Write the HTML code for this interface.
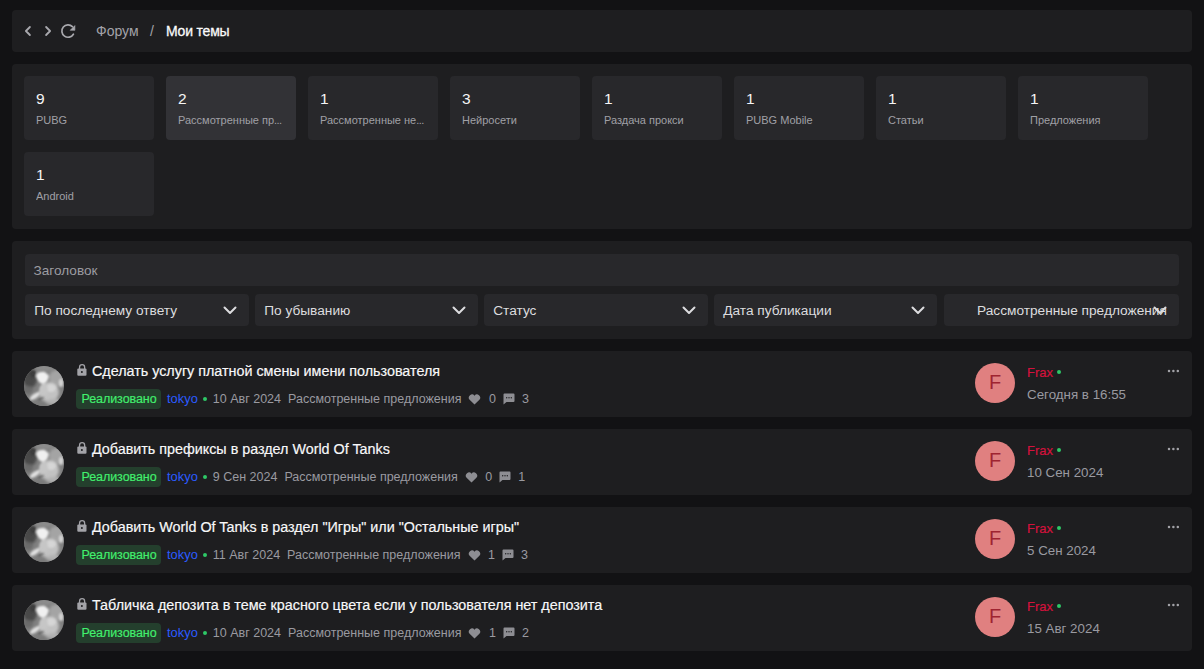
<!DOCTYPE html>
<html><head><meta charset="utf-8">
<style>
*{box-sizing:border-box;margin:0;padding:0}
html,body{width:1204px;height:669px;overflow:hidden;background:#121214;font-family:"Liberation Sans",sans-serif;color:#f2f2f3}
.abs{position:absolute}
.panel{position:absolute;left:12px;width:1180px;background:#1e1e20;border-radius:4px}
.crumbs{top:10px;height:42px}
.ic{position:absolute;top:0;left:0}
.bc{position:absolute;top:12px;font-size:14px;line-height:18px;white-space:nowrap}
.stats{top:64px;height:165px}
.card{position:absolute;width:130px;height:64px;background:#28282b;border-radius:4px}
.card.act{background:#323236}
.card .n{position:absolute;left:12px;top:13px;font-size:15.5px;line-height:20px;color:#f5f5f5}
.card .l{position:absolute;left:12px;top:37px;width:106px;font-size:11px;line-height:14px;color:#a0a0a6;white-space:nowrap;overflow:hidden;text-overflow:ellipsis}
.filters{top:241px;height:98px}
.inp{position:absolute;left:13px;top:13px;width:1154px;height:31.5px;background:#28282b;border-radius:4px}
.inp span{position:absolute;left:8.6px;top:9px;font-size:13.6px;line-height:16px;color:#9c9ca2}
.sel{position:absolute;top:53px;height:31.5px;background:#28282b;border-radius:4px;overflow:hidden}
.sel span{position:absolute;left:9.2px;top:8px;font-size:13.7px;line-height:17px;color:#dcdcdf;white-space:nowrap}
.sel svg{position:absolute;right:12.5px;top:12px}
.topic{position:absolute;left:12px;width:1180px;height:66px;background:#1e1e20;border-radius:4px}
.av{position:absolute;left:12px;top:15px;width:40px;height:40px;display:block}
.ttl{position:absolute;left:80px;top:11px;font-size:14.35px;line-height:18px;color:#f8f8f9;-webkit-text-stroke:0.18px #f8f8f9;white-space:nowrap;letter-spacing:-0.01px}
.lock{position:absolute;left:65px;top:13px}
.meta{position:absolute;left:64px;top:38px;height:20px;white-space:nowrap;font-size:12.5px;line-height:20px;color:#9a9aa0;display:flex;align-items:center}
.badge{height:19.5px;width:85px;background:#243f2d;border-radius:4px;color:#42f06e;padding-left:5.5px;line-height:21.5px;letter-spacing:-0.07px;-webkit-text-stroke:0.15px #42f06e}
.meta .tk{color:#2b5bff;margin-left:6px;font-size:12.9px}
.meta .gd{width:4px;height:4px;border-radius:50%;background:#2ec866;margin:0 6px 0 5px}
.meta .cat{margin-left:7px}
.meta svg{display:block}
.meta .ih{margin-left:7px}
.meta .n1{margin-left:7.5px}
.meta .ic2{margin-left:7px}
.meta .n2{margin-left:7px}
.fav{position:absolute;left:963px;top:12px;width:40px;height:40px;border-radius:50%;background:#e08080;color:#9f2431;font-size:20px;line-height:39px;text-align:center}
.frax{position:absolute;left:1015px;top:14px;font-size:13px;line-height:16px;color:#d3123c;-webkit-text-stroke:0.2px #d3123c}
.gdot{position:absolute;width:4px;height:4px;border-radius:50%;background:#2ec866}
.date{position:absolute;left:1015px;top:35px;font-size:13.35px;line-height:17px;color:#9a9aa0;white-space:nowrap}
.dots{position:absolute;left:1155px;top:16.5px}
</style></head><body>
<svg width="0" height="0" style="position:absolute"><defs><clipPath id="cc"><circle cx="20" cy="20" r="20"/></clipPath><filter id="bl" x="-20%" y="-20%" width="140%" height="140%"><feGaussianBlur stdDeviation="1.6"/></filter><filter id="bl2" x="-30%" y="-30%" width="160%" height="160%"><feGaussianBlur stdDeviation="0.8"/></filter></defs></svg>
<div class="panel crumbs">
  <svg class="ic" width="80" height="42" viewBox="0 0 80 42">
    <path d="M17.9 17 L13.9 21 L17.9 25" fill="none" stroke="#a9a9ae" stroke-width="1.8" stroke-linecap="round" stroke-linejoin="round"/>
    <path d="M34.1 17 L38.1 21 L34.1 25" fill="none" stroke="#a9a9ae" stroke-width="1.8" stroke-linecap="round" stroke-linejoin="round"/>
    <path d="M61.4 24.2 A6.2 6.2 0 1 1 60.4 16.6" fill="none" stroke="#a9a9ae" stroke-width="1.7" stroke-linecap="round"/>
    <path d="M62.9 15.6 L62.9 20.3 L58.2 20.3 Z" fill="#a9a9ae" stroke="#a9a9ae" stroke-width="0.6" stroke-linejoin="round"/>
  </svg>
  <div class="bc" style="left:84px;color:#a3a3a9">Форум</div>
  <div class="bc" style="left:138px;color:#a3a3a9">/</div>
  <div class="bc" style="left:154px;color:#fafafa;-webkit-text-stroke:0.3px #fafafa;letter-spacing:-0.2px">Мои темы</div>
</div>
<div class="panel stats">
  <div class="card " style="left:12px;top:12px"><div class="n">9</div><div class="l">PUBG</div></div>
  <div class="card act" style="left:154px;top:12px"><div class="n">2</div><div class="l">Рассмотренные пр<span style="letter-spacing:-0.6px">...</span></div></div>
  <div class="card " style="left:296px;top:12px"><div class="n">1</div><div class="l">Рассмотренные не<span style="letter-spacing:-0.6px">...</span></div></div>
  <div class="card " style="left:438px;top:12px"><div class="n">3</div><div class="l">Нейросети</div></div>
  <div class="card " style="left:580px;top:12px"><div class="n">1</div><div class="l">Раздача прокси</div></div>
  <div class="card " style="left:722px;top:12px"><div class="n">1</div><div class="l">PUBG Mobile</div></div>
  <div class="card " style="left:864px;top:12px"><div class="n">1</div><div class="l">Статьи</div></div>
  <div class="card " style="left:1006px;top:12px"><div class="n">1</div><div class="l">Предложения</div></div>
  <div class="card " style="left:12px;top:88px"><div class="n">1</div><div class="l">Android</div></div>
</div>
<div class="panel filters">
  <div class="inp"><span>Заголовок</span></div>
  <div class="sel" style="left:13px;width:224px"><span>По последнему ответу</span><svg width="14" height="9" viewBox="0 0 14 9"><path d="M1.5 1.5 L7 7 L12.5 1.5" fill="none" stroke="#dcdcdf" stroke-width="2" stroke-linecap="round" stroke-linejoin="round"/></svg></div>
  <div class="sel" style="left:243px;width:223px"><span>По убыванию</span><svg width="14" height="9" viewBox="0 0 14 9"><path d="M1.5 1.5 L7 7 L12.5 1.5" fill="none" stroke="#dcdcdf" stroke-width="2" stroke-linecap="round" stroke-linejoin="round"/></svg></div>
  <div class="sel" style="left:472px;width:224px"><span>Статус</span><svg width="14" height="9" viewBox="0 0 14 9"><path d="M1.5 1.5 L7 7 L12.5 1.5" fill="none" stroke="#dcdcdf" stroke-width="2" stroke-linecap="round" stroke-linejoin="round"/></svg></div>
  <div class="sel" style="left:702px;width:223px"><span>Дата публикации</span><svg width="14" height="9" viewBox="0 0 14 9"><path d="M1.5 1.5 L7 7 L12.5 1.5" fill="none" stroke="#dcdcdf" stroke-width="2" stroke-linecap="round" stroke-linejoin="round"/></svg></div>
  <div class="sel" style="left:931.5px;width:235.5px"><span style="left:33.5px">Рассмотренные предложения</span><svg width="14" height="9" viewBox="0 0 14 9"><path d="M1.5 1.5 L7 7 L12.5 1.5" fill="none" stroke="#dcdcdf" stroke-width="2" stroke-linecap="round" stroke-linejoin="round"/></svg></div>
</div>
<div class="topic" style="top:351px">
  <svg class="av" width="40" height="40" viewBox="0 0 40 40"><g clip-path="url(#cc)"><rect width="40" height="40" fill="#808080"/><g filter="url(#bl)"><ellipse cx="6" cy="13" rx="7" ry="9" fill="#4a4a4a"/><ellipse cx="33" cy="12" rx="8" ry="8" fill="#a4a4a4"/><ellipse cx="25" cy="26" rx="10" ry="10" fill="#c2c2c2"/><ellipse cx="4" cy="24" rx="5" ry="4" fill="#6a6a6a"/><ellipse cx="18" cy="40" rx="14" ry="4" fill="#7a7a7a"/><ellipse cx="30" cy="36" rx="8" ry="3" fill="#b0b0b0"/><ellipse cx="20" cy="2" rx="9" ry="3" fill="#8c8c8c"/></g><g filter="url(#bl2)"><path d="M12 10 Q13 6 17 6 Q21 5 23 8 Q26 9 24 13 Q23 17 19 18 Q14 17 12 10 Z" fill="#f0f0f0"/><ellipse cx="11" cy="30" rx="6" ry="2.3" transform="rotate(-35 11 30)" fill="#e0e0e0"/><ellipse cx="37" cy="17" rx="2.2" ry="4" fill="#d4d4d4"/><path d="M14 34 L20 31" stroke="#4e4e4e" stroke-width="1.3"/><ellipse cx="27" cy="22" rx="5" ry="4" fill="#d6d6d6"/><ellipse cx="20" cy="24" rx="4" ry="6" fill="#c6c6c6"/><ellipse cx="9" cy="8" rx="3" ry="4" fill="#3e3e3e"/></g></g></svg>
  <svg class="lock" width="11" height="13" viewBox="0 0 11 13"><path d="M2.55 5 V3.2 A2.55 2.55 0 0 1 7.65 3.2 V5" fill="none" stroke="#a3a3a8" stroke-width="1.3"/><rect x="0.3" y="4.4" width="9.2" height="7.4" rx="1.1" fill="#a3a3a8"/><circle cx="4.9" cy="7.9" r="1" fill="#1e1e20"/></svg><div class="ttl">Сделать услугу платной смены имени пользователя</div>
  <div class="meta"><div class="badge">Реализовано</div><span class="tk">tokyo</span><i class="gd"></i><span>10 Авг 2024</span><span class="cat">Рассмотренные предложения</span><span class="ih"><svg width="13" height="11" viewBox="0 0 13 11"><path d="M6.5 10.5 L1.6 5.8 A3 3 0 0 1 6.5 1.7 A3 3 0 0 1 11.4 5.8 Z" fill="#8e8e93"/></svg></span><span class="n1">0</span><span class="ic2"><svg width="12" height="12" viewBox="0 0 12 12"><path d="M1.5 0.5 H10.5 A1 1 0 0 1 11.5 1.5 V8 A1 1 0 0 1 10.5 9 H3.5 L0.5 11.5 V1.5 A1 1 0 0 1 1.5 0.5 Z" fill="#8e8e93"/><circle cx="3.7" cy="4.8" r="0.7" fill="#1e1e20"/><circle cx="6" cy="4.8" r="0.7" fill="#1e1e20"/><circle cx="8.3" cy="4.8" r="0.7" fill="#1e1e20"/></svg></span><span class="n2">3</span></div>
  <div class="fav">F</div>
  <div class="frax">Frax</div><div class="gdot" style="left:1045px;top:19px"></div>
  <div class="date">Сегодня в 16:55</div>
  <svg class="dots" width="14" height="6" viewBox="0 0 14 6"><circle cx="2" cy="3" r="1.25" fill="#a2a2a7"/><circle cx="6.4" cy="3" r="1.25" fill="#a2a2a7"/><circle cx="10.8" cy="3" r="1.25" fill="#a2a2a7"/></svg>
</div>
<div class="topic" style="top:429px">
  <svg class="av" width="40" height="40" viewBox="0 0 40 40"><g clip-path="url(#cc)"><rect width="40" height="40" fill="#808080"/><g filter="url(#bl)"><ellipse cx="6" cy="13" rx="7" ry="9" fill="#4a4a4a"/><ellipse cx="33" cy="12" rx="8" ry="8" fill="#a4a4a4"/><ellipse cx="25" cy="26" rx="10" ry="10" fill="#c2c2c2"/><ellipse cx="4" cy="24" rx="5" ry="4" fill="#6a6a6a"/><ellipse cx="18" cy="40" rx="14" ry="4" fill="#7a7a7a"/><ellipse cx="30" cy="36" rx="8" ry="3" fill="#b0b0b0"/><ellipse cx="20" cy="2" rx="9" ry="3" fill="#8c8c8c"/></g><g filter="url(#bl2)"><path d="M12 10 Q13 6 17 6 Q21 5 23 8 Q26 9 24 13 Q23 17 19 18 Q14 17 12 10 Z" fill="#f0f0f0"/><ellipse cx="11" cy="30" rx="6" ry="2.3" transform="rotate(-35 11 30)" fill="#e0e0e0"/><ellipse cx="37" cy="17" rx="2.2" ry="4" fill="#d4d4d4"/><path d="M14 34 L20 31" stroke="#4e4e4e" stroke-width="1.3"/><ellipse cx="27" cy="22" rx="5" ry="4" fill="#d6d6d6"/><ellipse cx="20" cy="24" rx="4" ry="6" fill="#c6c6c6"/><ellipse cx="9" cy="8" rx="3" ry="4" fill="#3e3e3e"/></g></g></svg>
  <svg class="lock" width="11" height="13" viewBox="0 0 11 13"><path d="M2.55 5 V3.2 A2.55 2.55 0 0 1 7.65 3.2 V5" fill="none" stroke="#a3a3a8" stroke-width="1.3"/><rect x="0.3" y="4.4" width="9.2" height="7.4" rx="1.1" fill="#a3a3a8"/><circle cx="4.9" cy="7.9" r="1" fill="#1e1e20"/></svg><div class="ttl">Добавить префиксы в раздел World Of Tanks</div>
  <div class="meta"><div class="badge">Реализовано</div><span class="tk">tokyo</span><i class="gd"></i><span>9 Сен 2024</span><span class="cat">Рассмотренные предложения</span><span class="ih"><svg width="13" height="11" viewBox="0 0 13 11"><path d="M6.5 10.5 L1.6 5.8 A3 3 0 0 1 6.5 1.7 A3 3 0 0 1 11.4 5.8 Z" fill="#8e8e93"/></svg></span><span class="n1">0</span><span class="ic2"><svg width="12" height="12" viewBox="0 0 12 12"><path d="M1.5 0.5 H10.5 A1 1 0 0 1 11.5 1.5 V8 A1 1 0 0 1 10.5 9 H3.5 L0.5 11.5 V1.5 A1 1 0 0 1 1.5 0.5 Z" fill="#8e8e93"/><circle cx="3.7" cy="4.8" r="0.7" fill="#1e1e20"/><circle cx="6" cy="4.8" r="0.7" fill="#1e1e20"/><circle cx="8.3" cy="4.8" r="0.7" fill="#1e1e20"/></svg></span><span class="n2">1</span></div>
  <div class="fav">F</div>
  <div class="frax">Frax</div><div class="gdot" style="left:1045px;top:19px"></div>
  <div class="date">10 Сен 2024</div>
  <svg class="dots" width="14" height="6" viewBox="0 0 14 6"><circle cx="2" cy="3" r="1.25" fill="#a2a2a7"/><circle cx="6.4" cy="3" r="1.25" fill="#a2a2a7"/><circle cx="10.8" cy="3" r="1.25" fill="#a2a2a7"/></svg>
</div>
<div class="topic" style="top:507px">
  <svg class="av" width="40" height="40" viewBox="0 0 40 40"><g clip-path="url(#cc)"><rect width="40" height="40" fill="#808080"/><g filter="url(#bl)"><ellipse cx="6" cy="13" rx="7" ry="9" fill="#4a4a4a"/><ellipse cx="33" cy="12" rx="8" ry="8" fill="#a4a4a4"/><ellipse cx="25" cy="26" rx="10" ry="10" fill="#c2c2c2"/><ellipse cx="4" cy="24" rx="5" ry="4" fill="#6a6a6a"/><ellipse cx="18" cy="40" rx="14" ry="4" fill="#7a7a7a"/><ellipse cx="30" cy="36" rx="8" ry="3" fill="#b0b0b0"/><ellipse cx="20" cy="2" rx="9" ry="3" fill="#8c8c8c"/></g><g filter="url(#bl2)"><path d="M12 10 Q13 6 17 6 Q21 5 23 8 Q26 9 24 13 Q23 17 19 18 Q14 17 12 10 Z" fill="#f0f0f0"/><ellipse cx="11" cy="30" rx="6" ry="2.3" transform="rotate(-35 11 30)" fill="#e0e0e0"/><ellipse cx="37" cy="17" rx="2.2" ry="4" fill="#d4d4d4"/><path d="M14 34 L20 31" stroke="#4e4e4e" stroke-width="1.3"/><ellipse cx="27" cy="22" rx="5" ry="4" fill="#d6d6d6"/><ellipse cx="20" cy="24" rx="4" ry="6" fill="#c6c6c6"/><ellipse cx="9" cy="8" rx="3" ry="4" fill="#3e3e3e"/></g></g></svg>
  <svg class="lock" width="11" height="13" viewBox="0 0 11 13"><path d="M2.55 5 V3.2 A2.55 2.55 0 0 1 7.65 3.2 V5" fill="none" stroke="#a3a3a8" stroke-width="1.3"/><rect x="0.3" y="4.4" width="9.2" height="7.4" rx="1.1" fill="#a3a3a8"/><circle cx="4.9" cy="7.9" r="1" fill="#1e1e20"/></svg><div class="ttl">Добавить World Of Tanks в раздел "Игры" или "Остальные игры"</div>
  <div class="meta"><div class="badge">Реализовано</div><span class="tk">tokyo</span><i class="gd"></i><span>11 Авг 2024</span><span class="cat">Рассмотренные предложения</span><span class="ih"><svg width="13" height="11" viewBox="0 0 13 11"><path d="M6.5 10.5 L1.6 5.8 A3 3 0 0 1 6.5 1.7 A3 3 0 0 1 11.4 5.8 Z" fill="#8e8e93"/></svg></span><span class="n1">1</span><span class="ic2"><svg width="12" height="12" viewBox="0 0 12 12"><path d="M1.5 0.5 H10.5 A1 1 0 0 1 11.5 1.5 V8 A1 1 0 0 1 10.5 9 H3.5 L0.5 11.5 V1.5 A1 1 0 0 1 1.5 0.5 Z" fill="#8e8e93"/><circle cx="3.7" cy="4.8" r="0.7" fill="#1e1e20"/><circle cx="6" cy="4.8" r="0.7" fill="#1e1e20"/><circle cx="8.3" cy="4.8" r="0.7" fill="#1e1e20"/></svg></span><span class="n2">3</span></div>
  <div class="fav">F</div>
  <div class="frax">Frax</div><div class="gdot" style="left:1045px;top:19px"></div>
  <div class="date">5 Сен 2024</div>
  <svg class="dots" width="14" height="6" viewBox="0 0 14 6"><circle cx="2" cy="3" r="1.25" fill="#a2a2a7"/><circle cx="6.4" cy="3" r="1.25" fill="#a2a2a7"/><circle cx="10.8" cy="3" r="1.25" fill="#a2a2a7"/></svg>
</div>
<div class="topic" style="top:585px">
  <svg class="av" width="40" height="40" viewBox="0 0 40 40"><g clip-path="url(#cc)"><rect width="40" height="40" fill="#808080"/><g filter="url(#bl)"><ellipse cx="6" cy="13" rx="7" ry="9" fill="#4a4a4a"/><ellipse cx="33" cy="12" rx="8" ry="8" fill="#a4a4a4"/><ellipse cx="25" cy="26" rx="10" ry="10" fill="#c2c2c2"/><ellipse cx="4" cy="24" rx="5" ry="4" fill="#6a6a6a"/><ellipse cx="18" cy="40" rx="14" ry="4" fill="#7a7a7a"/><ellipse cx="30" cy="36" rx="8" ry="3" fill="#b0b0b0"/><ellipse cx="20" cy="2" rx="9" ry="3" fill="#8c8c8c"/></g><g filter="url(#bl2)"><path d="M12 10 Q13 6 17 6 Q21 5 23 8 Q26 9 24 13 Q23 17 19 18 Q14 17 12 10 Z" fill="#f0f0f0"/><ellipse cx="11" cy="30" rx="6" ry="2.3" transform="rotate(-35 11 30)" fill="#e0e0e0"/><ellipse cx="37" cy="17" rx="2.2" ry="4" fill="#d4d4d4"/><path d="M14 34 L20 31" stroke="#4e4e4e" stroke-width="1.3"/><ellipse cx="27" cy="22" rx="5" ry="4" fill="#d6d6d6"/><ellipse cx="20" cy="24" rx="4" ry="6" fill="#c6c6c6"/><ellipse cx="9" cy="8" rx="3" ry="4" fill="#3e3e3e"/></g></g></svg>
  <svg class="lock" width="11" height="13" viewBox="0 0 11 13"><path d="M2.55 5 V3.2 A2.55 2.55 0 0 1 7.65 3.2 V5" fill="none" stroke="#a3a3a8" stroke-width="1.3"/><rect x="0.3" y="4.4" width="9.2" height="7.4" rx="1.1" fill="#a3a3a8"/><circle cx="4.9" cy="7.9" r="1" fill="#1e1e20"/></svg><div class="ttl">Табличка депозита в теме красного цвета если у пользователя нет депозита</div>
  <div class="meta"><div class="badge">Реализовано</div><span class="tk">tokyo</span><i class="gd"></i><span>10 Авг 2024</span><span class="cat">Рассмотренные предложения</span><span class="ih"><svg width="13" height="11" viewBox="0 0 13 11"><path d="M6.5 10.5 L1.6 5.8 A3 3 0 0 1 6.5 1.7 A3 3 0 0 1 11.4 5.8 Z" fill="#8e8e93"/></svg></span><span class="n1">1</span><span class="ic2"><svg width="12" height="12" viewBox="0 0 12 12"><path d="M1.5 0.5 H10.5 A1 1 0 0 1 11.5 1.5 V8 A1 1 0 0 1 10.5 9 H3.5 L0.5 11.5 V1.5 A1 1 0 0 1 1.5 0.5 Z" fill="#8e8e93"/><circle cx="3.7" cy="4.8" r="0.7" fill="#1e1e20"/><circle cx="6" cy="4.8" r="0.7" fill="#1e1e20"/><circle cx="8.3" cy="4.8" r="0.7" fill="#1e1e20"/></svg></span><span class="n2">2</span></div>
  <div class="fav">F</div>
  <div class="frax">Frax</div><div class="gdot" style="left:1045px;top:19px"></div>
  <div class="date">15 Авг 2024</div>
  <svg class="dots" width="14" height="6" viewBox="0 0 14 6"><circle cx="2" cy="3" r="1.25" fill="#a2a2a7"/><circle cx="6.4" cy="3" r="1.25" fill="#a2a2a7"/><circle cx="10.8" cy="3" r="1.25" fill="#a2a2a7"/></svg>
</div>
</body></html>
